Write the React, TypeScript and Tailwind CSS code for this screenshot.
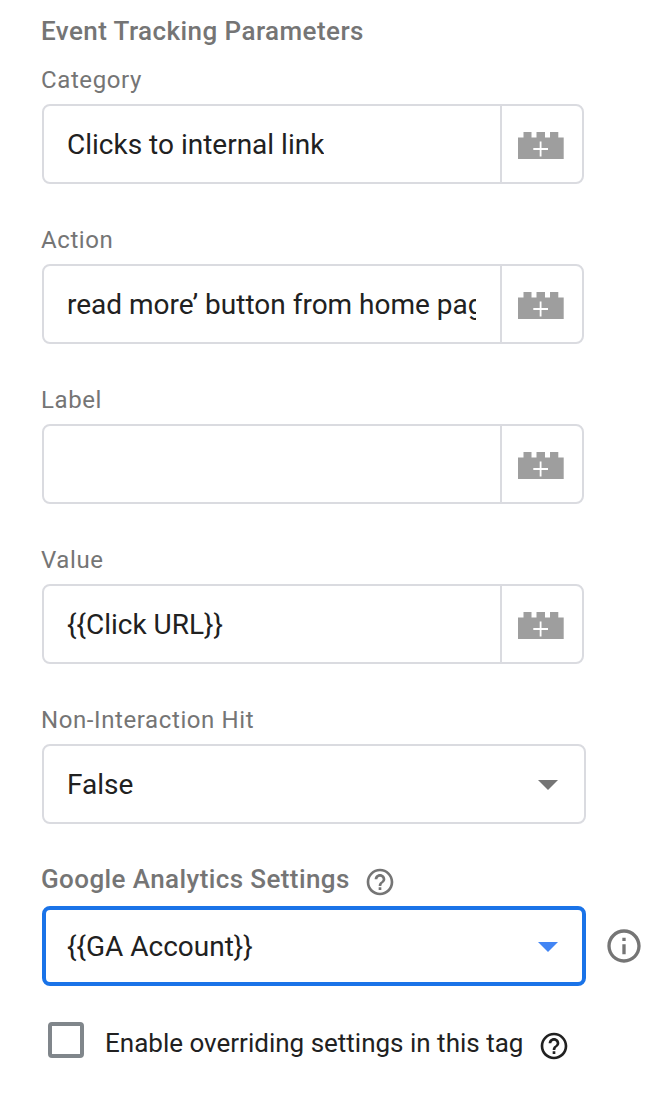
import React from 'react';

function Brick() {
  return (
    <svg width="46" height="27" viewBox="0 0 46 27" className="mt-[3px] block">
      <path fill="#9e9e9e" d="M0 5.500h5.500V0h8v5.500h5V0h8.500v5.500h5V0h8.300v5.500h5.400V27H0z" />
      <path stroke="#fff" strokeWidth="1.800" d="M15.300 17h14.700M22.600 9.600v14.800" />
    </svg>
  );
}

function Help({ className }: { className: string }) {
  return (
    <svg viewBox="0 0 24 24" fill="currentColor" className={className}>
      <path d="M11 18h2v-2h-2v2zm1-16C6.480 2 2 6.480 2 12s4.480 10 10 10 10-4.480 10-10S17.520 2 12 2zm0 18c-4.410 0-8-3.590-8-8s3.590-8 8-8 8 3.590 8 8-3.590 8-8 8zm0-14c-2.210 0-4 1.790-4 4h2c0-1.100.9-2 2-2s2 .9 2 2c0 2-3 1.750-3 5h2c0-2.250 3-2.500 3-5 0-2.210-1.790-4-4-4z" />
    </svg>
  );
}

function Label({ children }: { children: string }) {
  return (
    <div className="ml-[-1px] h-[40px] pt-[2px] text-[24px] leading-[28px] tracking-[0.6px] text-[#757575]">{children}</div>
  );
}

function Field({ label, value }: { label: string; value: string }) {
  return (
    <div className="h-[160px]">
      <Label>{label}</Label>
      <div className="flex h-[80px] w-[542px] rounded-[8px] border-2 border-[#dadbe0]">
        <div className="flex w-[456px] items-center pl-[23px] pr-[24px] pt-[2px]">
          <div className="overflow-hidden whitespace-nowrap text-[28px] leading-[40px] text-[#212121]">{value}</div>
        </div>
        <div className="flex flex-1 items-center border-l-2 border-[#dadbe0] pl-[16px]"><Brick /></div>
      </div>
    </div>
  );
}

export default function App() {
  return (
    <main className="h-[1096px] w-[652px] overflow-hidden bg-white pl-[42px] font-['Roboto',sans-serif]">
      <h2 className="ml-[-1px] h-[64px] pt-[16px] text-[26px] font-medium leading-[30px] tracking-[0.43px] text-[#757575]">Event Tracking Parameters</h2>
      <Field label="Category" value="Clicks to internal link" />
      <Field label="Action" value="read more’ button from home page" />
      <Field label="Label" value="" />
      <Field label="Value" value="{{Click URL}}" />
      <Label>Non-Interaction Hit</Label>
      <div className="flex h-[80px] w-[544px] items-center justify-between rounded-[8px] border-2 border-[#dadbe0] pl-[23px] pr-[26px] pt-[2px] text-[28px] text-[#212121]">
        False
        <svg width="20" height="10" viewBox="0 0 20 10"><path fill="#757575" d="M0 0h20L10 10z" /></svg>
      </div>
      <div className="ml-[-1px] flex h-[82px] items-start pt-[40px] text-[26px] font-medium leading-[30px] tracking-[0.4px] text-[#757575]">
        Google Analytics Settings
        <Help className="ml-[14.500px] mt-[2px] h-[32px] w-[32px]" />
      </div>
      <div className="flex items-center">
        <div className="flex h-[80px] w-[544px] items-center justify-between rounded-[8px] border-4 border-[#1a73e8] pl-[21px] pr-[24px] pt-[2px] text-[28px] text-[#212121]">
          {'{{GA Account}}'}
          <svg width="20" height="10" viewBox="0 0 20 10"><path fill="#4285f4" d="M0 0h20L10 10z" /></svg>
        </div>
        <svg viewBox="0 0 24 24" className="ml-[17.500px] h-[40px] w-[40px]" fill="#757575">
          <path d="M11 7h2v2h-2zm0 4h2v6h-2zm1-9C6.480 2 2 6.480 2 12s4.480 10 10 10 10-4.480 10-10S17.520 2 12 2zm0 18c-4.410 0-8-3.590-8-8s3.590-8 8-8 8 3.590 8 8-3.590 8-8 8z" />
        </svg>
      </div>
      <div className="flex h-[108px] items-center pl-[6px]">
        <div className="h-[36px] w-[36px] rounded-[4px] border-4 border-[#80868b]" />
        <span className="ml-[21px] mt-[6px] text-[26px] text-[#212121]">Enable overriding settings in this tag</span>
        <Help className="ml-[14.600px] mt-[12px] h-[32px] w-[32px] text-[#212121]" />
      </div>
    </main>
  );
}
